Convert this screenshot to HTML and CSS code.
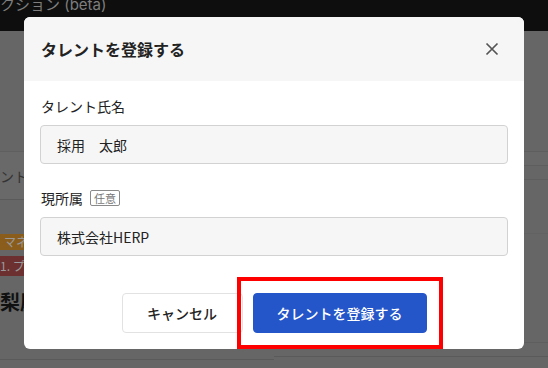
FILE: index.html
```html
<!DOCTYPE html>
<html lang="ja">
<head>
<meta charset="utf-8">
<link rel="stylesheet" href="styles.css">
</head>
<body>
<div class="page">
  <div class="topbar"><span class="topbar-title">クション (beta)</span></div>
  <div class="content">
    <div class="col-left">
      <div class="tabs"><span class="tab-text">ント</span></div>
      <div class="tags">
        <span class="tag tag-orange">マネ</span>
        <span class="tag tag-red">1. プロ</span>
      </div>
      <div class="heading">梨慶</div>
      <div class="bottom-line"></div>
    </div>
    <div class="col-right">
      <div class="r-band"></div>
      <div class="r-band2"></div>
      <div class="r-block"></div>
      <div class="r-bottom"></div>
    </div>
  </div>
</div>

<div class="overlay">
  <div class="modal">
    <div class="modal-header">
      <h2 class="modal-title">タレントを登録する</h2>
      <button class="close-btn" aria-label="閉じる">
        <svg width="14" height="14" viewBox="0 0 14 14"><path d="M1.5 1.5 L12.5 12.5 M12.5 1.5 L1.5 12.5" stroke="#555" stroke-width="1.7" fill="none"/></svg>
      </button>
    </div>
    <div class="modal-body">
      <div class="field">
        <label class="label">タレント氏名</label>
        <div class="input">採用　太郎</div>
      </div>
      <div class="field field-second">
        <label class="label">現所属<span class="optional">任意</span></label>
        <div class="input">株式会社HERP</div>
      </div>
    </div>
    <div class="modal-footer">
      <button class="btn btn-cancel">キャンセル</button>
      <span class="primary-wrap">
        <button class="btn btn-primary">タレントを登録する</button>
        <span class="highlight"></span>
      </span>
    </div>
  </div>
</div>
</body>
</html>
```

FILE: styles.css
```css
* { box-sizing: border-box; }
html, body {
  margin: 0;
  padding: 0;
  width: 548px;
  height: 368px;
  overflow: hidden;
  font-family: "Noto Sans CJK JP", "Noto Sans", sans-serif;
}
.page {
  width: 548px;
  height: 368px;
  background: #666666;
  display: flex;
  flex-direction: column;
  overflow: hidden;
}
.topbar {
  height: 31px;
  background: #0e0e0e;
  overflow: hidden;
  flex: none;
}
.topbar-title {
  display: block;
  margin-top: -5px;
  margin-left: 0;
  font-size: 15px;
  line-height: 20px;
  color: #7e7e7e;
  font-family: "Inter", "Noto Sans CJK JP", sans-serif;
}
.content {
  flex: 1;
  min-height: 0;
  display: grid;
  grid-template-columns: 1fr 1fr;
}
.col-left {
  display: flex;
  flex-direction: column;
}
.tabs {
  margin-top: 120px;
  height: 49px;
  border-top: 1px solid #5f5f5f;
  border-bottom: 1px solid #5a5a5a;
  background: #696969;
  display: flex;
  align-items: center;
}
.tab-text {
  margin-left: 0;
  font-size: 14px;
  color: #333;
}
.tags {
  margin-top: 34px;
  display: flex;
  flex-direction: column;
  gap: 6px;
}
.tag {
  align-self: flex-start;
  font-size: 12px;
  line-height: 16px;
  padding: 0 10px 0 4px;
  color: #999;
}
.tag-orange { background: #8a5d1c; height: 16px; }
.tag-red { background: #6c3030; height: 20px; line-height: 20px; padding-left: 0; }
.heading {
  margin-top: 14px;
  font-size: 20px;
  font-weight: 700;
  color: #111;
  line-height: 24px;
}
.bottom-line {
  margin-top: 45px;
  flex: 1;
  border-top: 1px solid #5a5a5a;
}
.col-right {
  display: flex;
  flex-direction: column;
}
.r-band {
  margin-top: 120px;
  height: 14px;
  border-top: 1px solid #5e5e5e;
  background: #686868;
}
.r-band2 {
  height: 15px;
  border-top: 1px solid #5e5e5e;
  border-bottom: 1px solid #5e5e5e;
}
.r-block {
  height: 110px;
  margin-top: 53px;
  border-top: 1px solid #626262;
  border-bottom: 1px solid #5e5e5e;
}
.r-bottom {
  flex: 1;
  margin-top: 13px;
  border-top: 1px solid #5a5a5a;
}

/* overlay & modal */
.overlay {
  position: fixed;
  inset: 0;
  display: flex;
  justify-content: center;
  align-items: flex-start;
  padding-top: 17px;
}
.modal {
  width: 500px;
  background: #fff;
  border-radius: 6px;
  overflow: hidden;
}
.modal-header {
  height: 64px;
  background: #f6f6f6;
  display: flex;
  align-items: center;
  justify-content: space-between;
  padding: 0 20px 0 17px;
}
.modal-title {
  margin: 0;
  font-size: 16px;
  font-weight: 700;
  color: #222;
  line-height: 24px;
}
.close-btn {
  width: 24px;
  height: 24px;
  padding: 0;
  border: 0;
  background: transparent;
  display: flex;
  align-items: center;
  justify-content: center;
}
.modal-body {
  padding: 15px 16px 0;
}
.field {
  display: flex;
  flex-direction: column;
}
.field-second { margin-top: 24px; }
.label {
  font-size: 14px;
  line-height: 20px;
  color: #222;
  margin-bottom: 9px;
  display: flex;
  align-items: center;
  padding-left: 1px;
}
.optional {
  margin-left: 7px;
  font-size: 11px;
  line-height: 14px;
  color: #777;
  border: 1px solid #8a8a8a;
  border-radius: 2px;
  padding: 0 3px;
}
.input {
  height: 39px;
  background: #f6f6f6;
  border: 1px solid #d2d2d2;
  border-radius: 4px;
  padding: 0 16px;
  display: flex;
  align-items: center;
  font-size: 14px;
  color: #222;
}
.modal-footer {
  display: flex;
  justify-content: center;
  gap: 10px;
  padding: 37px 16px 16px;
}
.btn {
  height: 40px;
  border-radius: 4px;
  font-family: "Noto Sans CJK JP", "Noto Sans", sans-serif;
  font-size: 14px;
  padding: 0;
}
.btn-cancel {
  width: 121px;
  background: #fff;
  border: 1px solid #e2e2e2;
  color: #222;
  font-weight: 500;
}
.primary-wrap {
  position: relative;
  display: flex;
}
.btn-primary {
  width: 174px;
  background: #2455c9;
  border: 1px solid #2455c9;
  color: #fff;
  font-weight: 500;
}
.highlight {
  position: absolute;
  inset: -16px;
  border: 4px solid #ff0000;
  pointer-events: none;
}
```
